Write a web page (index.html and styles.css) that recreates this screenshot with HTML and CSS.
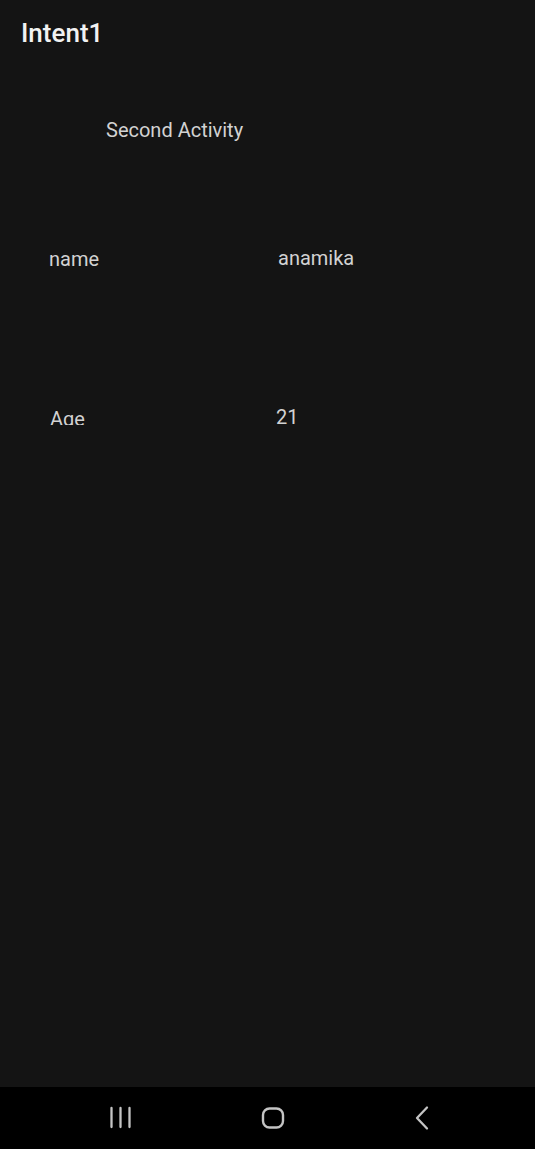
FILE: index.html
```html
<!DOCTYPE html>
<html>
<head>
<meta charset="utf-8">
<link rel="stylesheet" href="styles.css">
</head>
<body>
<div class="screen">
  <header class="appbar">Intent1</header>
  <main class="content">
    <div class="heading">Second Activity</div>
    <div class="row row-name">
      <div class="label">name</div>
      <div class="value">anamika</div>
    </div>
    <div class="row row-age">
      <div class="label clip">Age</div>
      <div class="value value-age">21</div>
    </div>
  </main>
  <nav class="navbar">
    <svg class="nav-icon" width="24" height="24" viewBox="0 0 24 24">
      <path d="M2.5 2v19M11.5 2v19M20.5 2v19" stroke="#c4c4c4" stroke-width="2.3" stroke-linecap="round" fill="none"/>
    </svg>
    <svg class="nav-icon" width="26" height="26" viewBox="0 0 26 26">
      <rect x="3" y="3.5" width="20" height="19" rx="6.5" stroke="#c4c4c4" stroke-width="2.4" fill="none"/>
    </svg>
    <svg class="nav-icon" width="20" height="28" viewBox="0 0 20 28">
      <path d="M15 3.5 L5 14 L15 24.5" stroke="#c4c4c4" stroke-width="2.3" stroke-linecap="round" stroke-linejoin="round" fill="none"/>
    </svg>
  </nav>
</div>
</body>
</html>
```

FILE: styles.css
```css
html, body {
  margin: 0;
  padding: 0;
  background: #141414;
}
.screen {
  width: 535px;
  height: 1149px;
  display: flex;
  flex-direction: column;
  font-family: Roboto, "Noto Sans", sans-serif;
  overflow: hidden;
}
.appbar {
  padding: 18px 0 0 21px;
  height: 30px;
  font-size: 26px;
  font-weight: 500;
  color: #f2f2f2;
  line-height: 30px;
}
.content {
  flex: 1;
  display: flex;
  flex-direction: column;
  color: #d2d2d2;
  font-size: 20px;
  line-height: 23px;
}
.heading {
  margin-top: 71px;
  padding-left: 106px;
}
.row {
  display: grid;
  grid-template-columns: 229px 1fr;
  padding-left: 49px;
}
.row-name {
  margin-top: 105px;
}
.row-name .label {
  padding-top: 1px;
}
.row-age {
  margin-top: 135px;
}
.row-age .label {
  padding-top: 2px;
  height: 17px;
  overflow: hidden;
  margin-left: 1px;
}
.value-age {
  margin-left: -2px;
}
.navbar {
  height: 62px;
  background: #000;
  display: flex;
  align-items: center;
  justify-content: space-between;
  padding: 0 103px 0 109px;
  box-sizing: border-box;
}
.nav-icon {
  display: block;
}
```
